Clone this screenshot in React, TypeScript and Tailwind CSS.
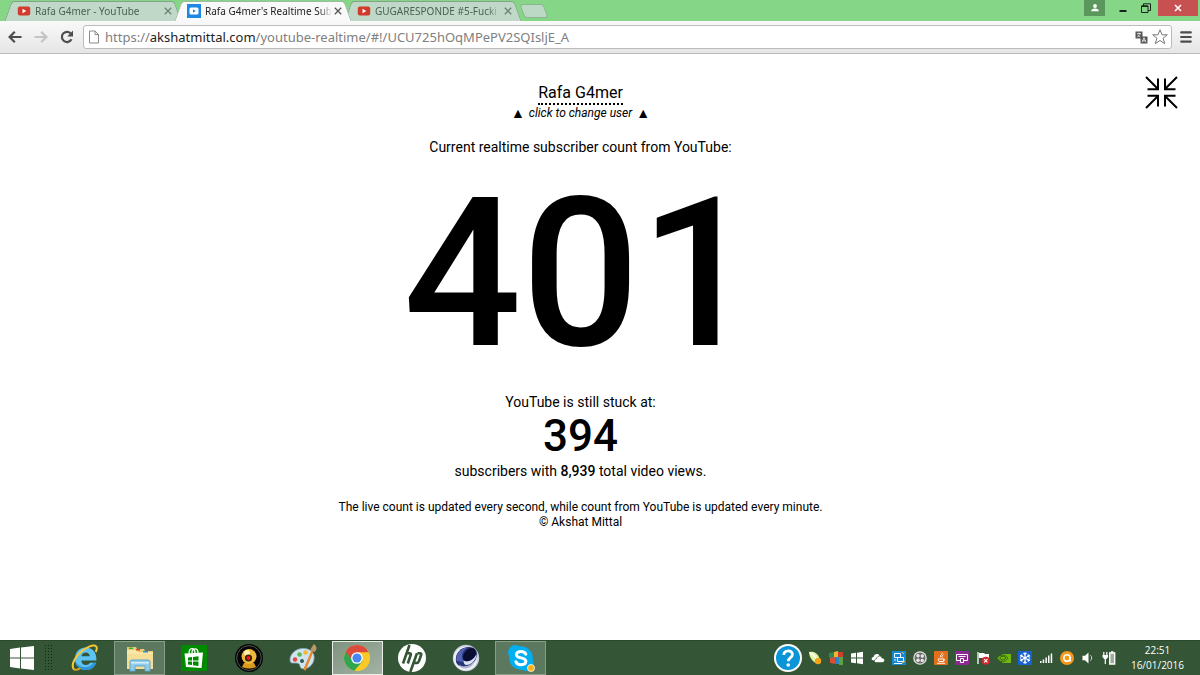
import { useState, type ReactNode } from "react";

type TabInfo = { title: string; kind: "youtube" | "counter" };

const tabs: TabInfo[] = [
  { title: "Rafa G4mer - YouTube", kind: "youtube" },
  { title: "Rafa G4mer's Realtime Sub", kind: "counter" },
  { title: "GUGARESPONDE #5-Fucki", kind: "youtube" },
];

export default function App() {
  return (
    <div className="flex min-h-screen flex-col bg-white font-['Roboto',sans-serif] text-black">
      <TitleBar />
      <Toolbar />
      <Page />
      <Taskbar />
    </div>
  );
}

/* ---------- browser chrome ---------- */

function TitleBar() {
  const [active, setActive] = useState(1);
  return (
    <header className="flex h-[21px] items-end justify-between bg-[#85d787] font-['Noto_Sans',sans-serif]">
      <div className="flex items-end pl-2">
        {tabs.map((tab, i) => (
          <Tab key={tab.title} tab={tab} active={i === active} onSelect={() => setActive(i)} />
        ))}
        <button
          aria-label="New tab"
          className="mb-[3px] ml-1 h-[14px] w-6 skew-x-[20deg] rounded-[3px] border border-[#8db592] bg-[#bcd9c6]"
        />
      </div>
      <div className="flex h-full items-start">
        <button aria-label="User" className="flex h-4 w-[21px] items-center justify-center bg-[#5b965d]">
          <svg viewBox="0 0 10 10" className="size-2.5" fill="#fff">
            <circle cx="5" cy="3" r="1.9" />
            <path d="M1.2 8.3c0-2 1.600-2.800 3.800-2.800s3.800.8 3.800 2.800z" />
          </svg>
        </button>
        <button aria-label="Minimize" className="ml-2 flex h-[18px] w-5 items-center justify-center">
          <svg viewBox="0 0 10 10" className="size-2.5">
            <path d="M1.500 6h7v2h-7z" fill="#16241a" />
          </svg>
        </button>
        <button aria-label="Restore" className="mr-0.5 ml-[3px] flex h-4 w-5 items-center justify-center">
          <svg viewBox="0 0 10 10" className="size-2.5" fill="none" stroke="#16241a">
            <path d="M.5 3h6.500v6.500H.5zM2.500 3V.8h7v6.700H7" strokeWidth="1" />
            <path d="M.5 3.200h6.500" strokeWidth="1.500" />
          </svg>
        </button>
        <button aria-label="Close" className="mr-[2px] flex h-4 w-10 items-center justify-center bg-[#c75050]">
          <svg viewBox="0 0 8 8" className="size-2" stroke="#fff" strokeWidth="1.600">
            <path d="M1 1l6 6M7 1L1 7" />
          </svg>
        </button>
      </div>
    </header>
  );
}

function Tab({ tab, active, onSelect }: { tab: TabInfo; active: boolean; onSelect: () => void }) {
  const fill = active ? "bg-[#f9f9f9] border-[#9fb9a2]" : "bg-[#bfd8c8] border-[#83a389]";
  return (
    <div className={`relative flex h-5 w-[170px] items-center ${active ? "z-10" : ""}`}>
      <span className={`absolute inset-y-0 right-5 left-0 -skew-x-[20deg] rounded-tl-[3px] border-t border-l ${fill}`} />
      <span className={`absolute inset-y-0 right-0 left-5 skew-x-[20deg] rounded-tr-[3px] border-t border-r ${fill}`} />
      <button
        onClick={onSelect}
        className={`relative ml-[9px] flex min-w-0 flex-1 items-center gap-1 text-left text-[10px] ${
          active ? "text-[#222]" : "text-[#4c6152]"
        }`}
      >
        {tab.kind === "youtube" ? <YoutubeIcon /> : <CounterIcon />}
        <span className="flex-1 mask-r-from-90% whitespace-nowrap">{tab.title}</span>
      </button>
      <button aria-label="Close tab" className="relative mr-[6px] ml-1">
        <svg viewBox="0 0 8 8" className="size-2" stroke={active ? "#555" : "#6d8273"} strokeWidth="1.300">
          <path d="M.8.8l6.400 6.400M7.200.8L.8 7.200" />
        </svg>
      </button>
    </div>
  );
}

function YoutubeIcon() {
  return (
    <svg viewBox="0 0 14 14" className="size-3.5 shrink-0">
      <rect x=".8" y="2.500" width="12.400" height="9" rx="2" fill="#d23a2c" />
      <path d="M5.500 4.800v4.400L9.300 7z" fill="#fff" />
    </svg>
  );
}

function CounterIcon() {
  return (
    <svg viewBox="0 0 14 14" className="size-3.5 shrink-0">
      <path d="M0 0h14v14H0z" fill="#1e88e5" />
      <rect x="2.500" y="3.500" width="9" height="7" rx="1.500" fill="#fff" />
      <path d="M6 5.300v3.400L8.800 7z" fill="#1e88e5" />
    </svg>
  );
}

function Toolbar() {
  return (
    <nav className="flex h-[33px] items-center border-b border-[#b9b9b9] bg-linear-to-b from-[#f9f9f9] to-[#e6e6e6] px-2">
      <button aria-label="Back">
        <svg viewBox="0 0 14 14" className="size-3.5" fill="none" stroke="#4d4d4d" strokeWidth="2.200">
          <path d="M13.500 7H2M6.800 1.800L1.600 7l5.200 5.200" />
        </svg>
      </button>
      <button aria-label="Forward" className="ml-3">
        <svg viewBox="0 0 14 14" className="size-3.5" fill="none" stroke="#c4c4c4" strokeWidth="2.200">
          <path d="M.5 7H12M7.200 1.800L12.400 7l-5.200 5.200" />
        </svg>
      </button>
      <button aria-label="Reload" className="ml-3">
        <svg viewBox="0 0 14 14" className="size-3.5" fill="none">
          <path d="M11.500 9.300A5.100 5.100 0 1 1 10.600 3.300" stroke="#4d4d4d" strokeWidth="2.200" />
          <path d="M13 .6v5.800H7.200z" fill="#4d4d4d" />
        </svg>
      </button>
      <div className="ml-[9px] flex h-6 flex-1 items-center rounded-[3px] border border-[#bcbcbc] bg-white">
        <svg viewBox="0 0 12 14" className="ml-1 h-3.5 w-3" fill="#fff" stroke="#8c8c8c">
          <path d="M1.500 1h5.500l3.500 3.500V13h-9zM7 1v3.500h3.500" />
        </svg>
        <a
          href="#!/UCU725hOqMPePV2SQIsljE_A"
          className="ml-[5px] flex-1 font-['Noto_Sans',sans-serif] text-[13px] leading-5 text-[#808080]"
        >
          https://<span className="text-[#222]">akshatmittal.com</span>/youtube-realtime/#!/UCU725hOqMPePV2SQIsljE_A
        </a>
        <button aria-label="Translate">
          <svg viewBox="0 0 13 13" className="size-[13px]">
            <path d="M.5.500h7v7h-7z" fill="#555" />
            <path d="M2 2.500h4M4 1.500v1M2.200 6c1.600-.7 2.600-1.800 2.900-3.300M2.800 3.500c.4 1.200 1.300 2 2.700 2.500" stroke="#eee" strokeWidth=".8" fill="none" />
            <path d="M5.500 5.500h7v7h-7z" fill="#555" />
            <path d="M7 11.300l2-4.600 2 4.600M7.700 9.800h2.600" stroke="#eee" strokeWidth=".9" fill="none" />
          </svg>
        </button>
        <button aria-label="Bookmark" className="mr-[3px] ml-1">
          <svg viewBox="0 0 16 16" className="size-4" fill="#fff" stroke="#777" strokeLinejoin="round">
            <path d="M8 .8l2 5h5.300l-4.200 3.400 1.600 5.500L8 11.500l-4.700 3.200 1.600-5.500L.7 5.800H6z" />
          </svg>
        </button>
      </div>
      <button aria-label="Menu" className="ml-2">
        <svg viewBox="0 0 12 12" className="size-3" fill="none" stroke="#4d4d4d" strokeWidth="2.200" strokeLinecap="round">
          <path d="M1.200 1.400h9.600M1.200 6h9.600M1.200 10.600h9.600" />
        </svg>
      </button>
    </nav>
  );
}

/* ---------- page ---------- */

function Page() {
  return (
    <div className="flex flex-1 items-start pr-[22px] pl-4">
      <main className="flex flex-1 flex-col items-center pt-7 text-center">
        <button className="border-b-2 border-dotted border-black text-base leading-[21px]">Rafa G4mer</button>
        <p className="flex items-center gap-1 text-xs leading-4">
          <span className="text-sm leading-4">▲</span>
          <i>click to change user</i>
          <span className="text-sm leading-4">▲</span>
        </p>
        <p className="mt-4 text-sm leading-5">Current realtime subscriber count from YouTube:</p>
        <h1 className="text-[208px] leading-[235px] font-medium">401</h1>
        <p className="text-sm leading-5">YouTube is still stuck at:</p>
        <h2 className="text-[44px] leading-[49px] font-medium">394</h2>
        <p className="text-sm leading-5">
          subscribers with <b className="font-medium">8,939</b> total video views.
        </p>
        <footer className="mt-[19px] text-xs leading-[15px]">
          <p>The live count is updated every second, while count from YouTube is updated every minute.</p>
          <p>© Akshat Mittal</p>
        </footer>
      </main>
      <button aria-label="Exit full screen" className="mt-[22px]">
        <svg viewBox="0 0 33 33" className="size-[33px]" fill="none" stroke="#000" strokeWidth="2">
          <path d="M1 1l11.500 11.500M2.500 13.200H13V2.500M32 1L20.500 12.500M30.500 13.200H20V2.500M1 32l11.500-11.500M2.500 19.800H13v10.700M32 32L20.500 20.500M30.500 19.800H20v10.700" />
        </svg>
      </button>
    </div>
  );
}

/* ---------- taskbar ---------- */

type TaskItem = { label: string; state?: "open" | "active"; icon: ReactNode };

const taskItems: TaskItem[] = [
  {
    label: "Internet Explorer",
    icon: (
      <svg viewBox="0 0 28 28" className="size-7" fill="none">
        <path
          d="M14.500 3.500C8 3.500 4 8.500 4 14.800 4 21.500 8.500 26 15 26c5 0 8.600-2.600 10-7.200h-6.200c-.7 1.500-2 2.200-3.800 2.200-2.700 0-4.400-1.700-4.600-4.600h15C25.800 8.500 21.500 3.500 14.500 3.500zM10.600 12.200c.4-2.400 1.900-3.700 4.200-3.700 2.200 0 3.700 1.300 4 3.700z"
          fill="#5cc3f3"
        />
        <path d="M5 18c1.500 5 5 8 10 8 5 0 8.600-2.600 10-7.200h-2.500C18 25 9 25 5 18z" fill="#2b95dc" />
        <path d="M3 25.500C-1 21 5 10.500 14 4.800c6-3.800 10.500-4.300 11.500-2 .6 1.500.1 3.400-.8 5.200" stroke="#f4c63a" strokeWidth="2" />
        <path d="M2.800 25.300c1.700 1.200 4.200.5 6.700-1" stroke="#e5a920" strokeWidth="1.800" />
      </svg>
    ),
  },
  {
    label: "File Explorer",
    state: "open",
    icon: (
      <svg viewBox="0 0 28 28" className="size-7">
        <path d="M1 3h9l1 2h7l1 2h8v18H1z" fill="#e8c96c" />
        <path d="M1 6h10l1 2h15v17H1z" fill="#f8e7a8" />
        <path d="M1 10h26v15H1z" fill="#f5df97" />
        <path d="M3 3.500h4v1.500H3z" fill="#2fb344" />
        <path d="M10 5h4v1.500h-4z" fill="#d64534" />
        <path d="M17 7h5v1.500h-5z" fill="#3388d8" />
        <path d="M4 17.500q0-1.500 2-1.500h16q2 0 2 1.500V27h-5v-5H9v5H4z" fill="#8fcbea" stroke="#5fa5cd" />
        <path d="M5 18h18v1.500H5z" fill="#d4effb" />
      </svg>
    ),
  },
  {
    label: "Store",
    icon: (
      <svg viewBox="0 0 26 26" className="size-[26px]">
        <path d="M0 0h26v26H0z" fill="#008a00" />
        <path d="M3.500 8.500L22 7.500 20.500 23 5 22z" fill="#fff" />
        <path d="M8 8.500C8 2 14 2 14 8M11 8c0-5 6-6 6 0" fill="none" stroke="#fff" strokeWidth="1.300" />
        <path d="M7 12.500l4-.5v3.500H7zm5-.6l5.500-.7v4.300H12zM7 16.500h4V20l-4-.6zm5 0h5.500V21l-5.500-.8z" fill="#008a00" />
      </svg>
    ),
  },
  {
    label: "Webcam",
    icon: (
      <svg viewBox="0 0 28 28" className="size-7">
        <circle cx="14" cy="14" r="14" fill="#050505" />
        <circle cx="14" cy="14" r="12.300" fill="none" stroke="#555" strokeWidth="1" />
        <path d="M9 19h10l2 4q-7 3-14 0z" fill="#d99a1e" />
        <circle cx="14" cy="12.500" r="7.500" fill="#eeb93a" />
        <circle cx="12" cy="9" r="3" fill="#fff1b0" />
        <circle cx="13.500" cy="14" r="3.600" fill="#3a2308" />
        <circle cx="13.500" cy="14" r="1.900" fill="#f11" />
      </svg>
    ),
  },
  {
    label: "Paint",
    icon: (
      <svg viewBox="0 0 28 28" className="size-7">
        <path d="M1 16C1 9 8 4 15 4.500c7 .3 11 5 10 10.500-1 7-7 10.500-12 9.500-3-.6-1-4-3.500-5C6 18 1 21 1 16z" fill="#cfe3f1" stroke="#8aa9c0" strokeWidth=".8" />
        <circle cx="6" cy="15.500" r="2.200" fill="#e24b3c" />
        <circle cx="10.500" cy="10.500" r="2.300" fill="#5bb848" />
        <circle cx="16.500" cy="8.500" r="2.300" fill="#f2bb30" />
        <circle cx="13" cy="17" r="2" fill="#315b52" />
        <path d="M25 5L16 27l-1-3z" fill="#d57b28" />
        <path d="M23 8l-7.500 18" stroke="#e48b34" strokeWidth="2.400" />
        <path d="M21.500 7C21 4 24 3 24.500 0c3 1.500 4.500 5 1 8z" fill="#c09469" />
      </svg>
    ),
  },
  {
    label: "Google Chrome",
    state: "active",
    icon: (
      <svg viewBox="0 0 28 28" className="size-[26px]">
        <circle cx="14" cy="14" r="14" fill="#fbc926" />
        <path d="M14 14L1.900 7a14 14 0 0 0 9.200 20.700z" fill="#31a650" />
        <path d="M11 27.700L20.500 17 14 14 7 18z" fill="#31a650" />
        <path d="M1.900 7A14 14 0 0 1 26.600 8H14l-5.500 8z" fill="#db4a3c" />
        <path d="M26.600 8H14l6.500 10-6.500 10A14 14 0 0 0 26.600 8z" fill="#fbc926" />
        <circle cx="14" cy="14" r="6.300" fill="#fff" />
        <circle cx="14" cy="14" r="4.900" fill="#4587f3" />
      </svg>
    ),
  },
  {
    label: "HP",
    icon: (
      <svg viewBox="0 0 28 28" className="size-7">
        <circle cx="14" cy="14" r="14" fill="#fff" />
        <path
          d="M11.500 1L5 19.500M9 9.200h2.500q1.800 0 1.200 1.800L9.800 19.500M19.500 9.200h2.300q1.900 0 1.300 1.800L21 17q-.8 2-2.400 2h-2.200M19 9.200L12.300 28"
          fill="none"
          stroke="#345636"
          strokeWidth="2.600"
        />
      </svg>
    ),
  },
  {
    label: "Cinema 4D",
    icon: (
      <svg viewBox="0 0 28 28" className="size-7">
        <circle cx="14" cy="14" r="13.200" fill="#c3c9d6" />
        <circle cx="13.500" cy="14.500" r="12" fill="#eef0f5" />
        <path d="M4 18C2.500 9 9 3 17 3c5 0 8 3 8 7 0 7-6 13-12 13-5 0-8-2-9-5z" fill="#2a3578" />
        <path d="M4.500 17C3.500 10 9 4 15 3.800 9 8 9 14 12 18z" fill="#5263b4" />
        <path d="M11 14c0-6 5-10 9-10 5 1 5 7 1 10.500-4 3-9 4-10-.5z" fill="#0a0d31" />
        <path d="M11.500 16.500c4 2.500 9.500 0 13-6-.5 6-5.500 10.500-10 10.500-2 0-3-2-3-4.500z" fill="#dfe4f3" />
        <path d="M7 20.500c4 3.500 11 2 16-4-2 6-6 8-10 8-3 0-5-1.500-6-4z" fill="#aeb6cf" />
      </svg>
    ),
  },
  {
    label: "Skype",
    state: "open",
    icon: (
      <svg viewBox="0 0 28 28" className="size-7">
        <circle cx="8.500" cy="8.500" r="7.500" fill="#00aff0" />
        <circle cx="19" cy="19.500" r="7.500" fill="#00aff0" />
        <circle cx="14" cy="14" r="11.800" fill="#00aff0" />
        <path
          d="M18.800 10.200c-.7-1.900-2.500-2.700-4.800-2.700-2.600 0-4.600 1.200-4.600 3.200 0 4.400 9.500 2 9.500 6.600 0 2.200-2.100 3.400-4.800 3.400-2.600 0-4.500-1-5.200-3"
          fill="none"
          stroke="#fff"
          strokeWidth="3"
          strokeLinecap="round"
        />
        <circle cx="24" cy="24" r="3.500" fill="#fbb117" stroke="#fff" strokeWidth=".8" />
      </svg>
    ),
  },
];

const trayItems: { label: string; icon: ReactNode }[] = [
  {
    label: "Sync",
    icon: (
      <>
        <path d="M1 1c5-1 8 1 10 5s0 7-3 6S1 6 1 1z" fill="#e4f5a0" />
        <path d="M2 2c3 1 6 4 7 9" stroke="#fff" strokeWidth="1.500" fill="none" />
        <circle cx="10" cy="10" r="3.200" fill="#f6a51a" />
      </>
    ),
  },
  {
    label: "Graphics",
    icon: (
      <>
        <path d="M0 2l5-1v6H0z" fill="#33865a" />
        <path d="M5 1l4-1v7H5z" fill="#efb52f" />
        <path d="M9 1h5v5H9z" fill="#cf3f2c" />
        <path d="M1 7l5-1 1 7-6-1z" fill="#d84f34" />
        <path d="M6 6h4v7H7z" fill="#3182c7" />
        <path d="M10 6h4v8h-4z" fill="#58a540" />
      </>
    ),
  },
  {
    label: "Windows",
    icon: <path d="M1 2.500l5-.7v4.700H1zm6-.8l6-.9v5.700H7zM1 7.500h5v4.700l-5-.7zm6 0h6v5.700l-6-.9z" fill="#fff" />,
  },
  {
    label: "OneDrive",
    icon: (
      <>
        <path d="M3 9.500C0 9.500 0 6.500 2.500 6 3 3 7 2 8.500 4.500L5 8z" fill="#fff" />
        <path d="M5.500 11.500c-3 0-2.700-3.500 0-3.700.5-3.300 4.500-3.600 5.500-.8 3.500.2 3.300 4.500.3 4.500z" fill="#fff" stroke="#345636" strokeWidth=".6" />
      </>
    ),
  },
  {
    label: "Graphics properties",
    icon: (
      <>
        <path d="M0 0h14v14H0z" fill="#1688d4" />
        <path d="M2.500 2.500h6v4h-6zM5.500 6.500h6v4h-6zM2 12.500h8M2 9h2" fill="none" stroke="#eef7fd" />
        <path d="M10 1l2 2M10 12l3-2" stroke="#f5c84c" />
      </>
    ),
  },
  {
    label: "Camera",
    icon: (
      <>
        <circle cx="7" cy="7" r="6.800" fill="#e2e2e2" />
        <circle cx="7" cy="7" r="5.500" fill="#6b6f6b" />
        <circle cx="5" cy="4.700" r="1.700" fill="#e9e9e9" />
        <circle cx="9.300" cy="5" r="1.700" fill="#e9e9e9" />
        <circle cx="5" cy="9.200" r="1.700" fill="#e9e9e9" />
        <circle cx="9.200" cy="9.400" r="1.700" fill="#e9e9e9" />
      </>
    ),
  },
  {
    label: "Java",
    icon: (
      <>
        <rect width="14" height="14" rx="1" fill="#e26f1b" />
        <path d="M8 1.500c1 2-3 2.500-1 5M9.500 3.500C8 4.500 7.500 5.500 8.300 6.500M4 8h5.500v2.500H5zM9.500 8c2 0 1.500 1.800-.5 2M3 12.300h8" fill="none" stroke="#fff" strokeWidth=".9" />
      </>
    ),
  },
  {
    label: "Display",
    icon: (
      <>
        <rect width="14" height="14" rx="1" fill="#8a2a92" />
        <path d="M5 9.500H1.500v-6h11v6H9M3.500 5.500h7M5.500 7.500h3v4h-3z" fill="none" stroke="#fff" />
      </>
    ),
  },
  {
    label: "Action center",
    icon: (
      <>
        <path d="M2 1v12" stroke="#fff" strokeWidth="1.300" />
        <path d="M3 2h5l1 1h4v5H8L7 7H3z" fill="#fff" />
        <circle cx="9.800" cy="9.800" r="4" fill="#d8262c" />
        <path d="M8.200 8.200l3.200 3.200M11.400 8.200l-3.200 3.200" stroke="#fff" strokeWidth="1.200" />
      </>
    ),
  },
  {
    label: "NVIDIA",
    icon: (
      <>
        <path d="M5 3h9v9H5z" fill="#72b512" />
        <path d="M0 7c3-4 8-4 11 0-3 5-8 5-11 0z" fill="#72b512" stroke="#2d5c16" strokeWidth=".8" />
        <path d="M2.500 7c2-2.300 4.500-2.300 6.500 0-2 2.500-4.500 2.500-6.500 0z" fill="none" stroke="#2d5c16" />
      </>
    ),
  },
  {
    label: "Freeze",
    icon: (
      <>
        <path d="M0 0h14v14H0z" fill="#1762cf" />
        <path
          d="M7 1.500v11M2.200 4.200l9.600 5.600M11.800 4.200L2.200 9.800M5.500 2L7 3.500 8.500 2M5.500 12L7 10.500 8.500 12M2 6.300l2-.9-.3-2.100M12 6.300l-2-.9.3-2.100M2 7.700l2 .9-.3 2.100M12 7.700l-2 .9.3 2.100"
          fill="none"
          stroke="#fff"
          strokeWidth="1.200"
        />
      </>
    ),
  },
  {
    label: "Network",
    icon: <path d="M1 10h1.500v2H1zm2.700-1.500h1.500V12H3.700zm2.700-2h1.500V12H6.400zm2.600-2h1.500V12H9zM11.700 2.500h1.500V12h-1.500z" fill="#fff" />,
  },
  {
    label: "Antivirus",
    icon: (
      <>
        <circle cx="7" cy="7" r="7" fill="#f8991d" />
        <circle cx="7" cy="7" r="3.200" fill="none" stroke="#fff" strokeWidth="1.500" />
        <path d="M10.200 6v4.500" stroke="#fff" strokeWidth="1.500" />
      </>
    ),
  },
  {
    label: "Volume",
    icon: (
      <>
        <path d="M1.500 4.800H4L7.500 1.500v11L4 9.200H1.500z" fill="#fff" />
        <path d="M9.500 4.300c1.600 1.400 1.600 4 0 5.400" fill="none" stroke="#d7dfd7" />
      </>
    ),
  },
  {
    label: "Battery",
    icon: (
      <>
        <path d="M7.700 2h5v11h-5zM9 .8h2.400" fill="#9fae9f" stroke="#fff" strokeWidth="1.300" />
        <path d="M1.800 1v3M4.800 1v3M3.300 7v6" stroke="#fff" strokeWidth="1.200" />
        <path d="M.5 4h5.600v2L4.500 8H2.200L.5 6z" fill="#fff" />
      </>
    ),
  },
];

function Taskbar() {
  return (
    <footer className="flex h-[35px] items-center justify-between border-t border-[#2b4a2d] bg-[#345636] text-white">
      <div className="flex h-full items-center">
        <button aria-label="Start" className="ml-2.5">
          <svg viewBox="0 0 24 24" className="size-6" fill="#fff">
            <path d="M0 3l10-1.400v9.900H0zM11 1.500L24 0v11.500H11zM0 12.500h10v9.900L0 21zM11 12.500h13V24l-13-1.500z" />
          </svg>
        </button>
        <span className="ml-[10px] h-7 w-2 bg-[radial-gradient(#15291a_1px,transparent_1px)] bg-size-[3px_3px]" />
        <ul className="ml-[6px] grid h-full w-[490px] grid-cols-9">
          {taskItems.map((item) => (
            <li key={item.label} className="flex justify-center">
              <TaskButton item={item} />
            </li>
          ))}
        </ul>
      </div>
      <div className="flex items-center pr-4">
        <button aria-label="Help" className="mr-[3px]">
          <svg viewBox="0 0 28 28" className="size-7">
            <circle cx="14" cy="14" r="14" fill="#fff" />
            <circle cx="14" cy="14" r="12" fill="#0a95d9" />
            <path d="M9.800 11c0-5.500 8.600-5.500 8.600-.5 0 3-4.200 3.200-4.200 6.800" fill="none" stroke="#fff" strokeWidth="2.800" />
            <circle cx="14.200" cy="21" r="1.800" fill="#fff" />
          </svg>
        </button>
        <ul className="grid w-[315px] grid-cols-15">
          {trayItems.map((item) => (
            <li key={item.label} className="flex justify-center">
              <button aria-label={item.label}>
                <svg viewBox="0 0 14 14" className="size-3.5">
                  {item.icon}
                </svg>
              </button>
            </li>
          ))}
        </ul>
        <div className="ml-[11px] text-center font-['Open_Sans',sans-serif] text-[10px] leading-[15px]">
          <p>22:51</p>
          <p>16/01/2016</p>
        </div>
      </div>
    </footer>
  );
}

function TaskButton({ item }: { item: TaskItem }) {
  const look =
    item.state === "active"
      ? "border-[#e9eee9] bg-linear-to-br from-[#7e937f] to-[#a3b2a4]"
      : item.state === "open"
        ? "border-[#8a9d8b] bg-[#5c785e]"
        : "border-transparent";
  return (
    <button aria-label={item.label} className={`flex w-[51px] items-center justify-center border ${look}`}>
      {item.icon}
    </button>
  );
}
